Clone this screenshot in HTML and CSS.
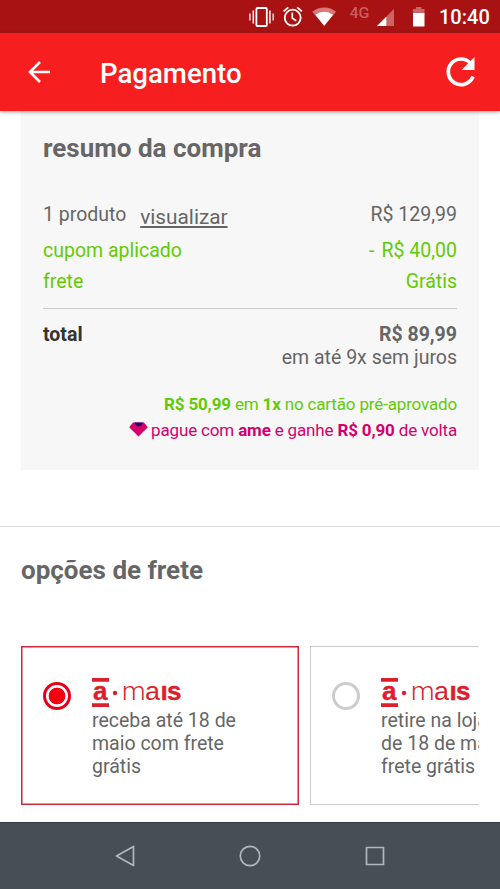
FILE: index.html
```html
<!DOCTYPE html>
<html lang="pt-BR">
<head>
<meta charset="utf-8">
<meta name="viewport" content="width=device-width">
<title>Pagamento</title>
<link rel="stylesheet" href="styles.css">
</head>
<body>
<div class="statusbar">
  <svg class="status-icons" width="190" height="33" viewBox="242 0 190 33">
    <g fill="none" stroke="#fff" stroke-width="1.8">
      <rect x="256.4" y="8" width="10.4" height="18" rx="1"/>
      <path d="M253.3 10.5v13M269.9 10.5v13" stroke-width="1.5"/>
      <path d="M249.9 13.5v7M273.2 13.5v7" stroke-width="1.3"/>
      <circle cx="292.7" cy="17.7" r="8"/>
      <path d="M292.3 12.5v5.8l4 2.5" stroke-width="1.6"/>
      <path d="M283.6 11.4l4.700-4M297.200 7.400l4.700 4"/>
    </g>
    <path d="M312.300 11.800C319 6 329.500 6 336 11.800L324.200 25.800Z" fill="#d97878"/>
    <path d="M315.300 14.800Q324.200 8.800 333.100 14.800L324.200 25.800Z" fill="#fff"/>
    <text class="network" x="349.500" y="17.800" textLength="20" lengthAdjust="spacingAndGlyphs">4G</text>
    <path d="M377 26L394 9V26Z" fill="#ca6565"/>
    <path d="M377 26L386.300 16.700V26Z" fill="#fff"/>
    <path d="M413 13V9h3V7h5.500v2h3v4z" fill="#ca6565"/>
    <path d="M413 13h11.500v13.500H413z" fill="#fff"/>
  </svg>
  <span class="clock">10:40</span>
</div>
<header class="appbar">
  <svg class="back" width="24" height="24" viewBox="0 0 24 24" fill="none" stroke="#fff" stroke-width="2.6"><path d="M24 12H4.500M14 2L4 12 14 22"/></svg>
  <h1>Pagamento</h1>
  <svg class="reload" width="32" height="32" viewBox="0 0 32 32"><path d="M25.600 7.200A12.800 12.800 0 1 0 28 20.500" fill="none" stroke="#fff" stroke-width="3.700"/><path d="M29.500 1V14H16.500Z" fill="#fff"/></svg>
</header>
<main>
  <section class="summary">
    <h2>resumo da compra</h2>
    <div class="row product"><span>1 produto <a class="view">visualizar</a></span><span>R$ 129,99</span></div>
    <div class="row discount"><span>cupom aplicado</span><span><span class="minus">-</span>R$ 40,00</span></div>
    <div class="row discount"><span>frete</span><span>Grátis</span></div>
    <div class="totals">
      <strong class="total-label">total</strong>
      <div class="amount"><strong>R$ 89,99</strong><br><span class="installments">em até 9x sem juros</span></div>
    </div>
    <div class="offers">
      <p class="card-offer"><b>R$ 50,99</b> em <b>1x</b> no cartão pré-aprovado</p>
      <p class="ame-offer"><svg class="gem" width="19" height="15" viewBox="0 0 19 15"><path d="M4 .5H15L18.800 5.300 9.500 14.500.2 5.300Z" fill="#d5006c"/><path d="M5.500.5H14L12.500 3.500 9.700 4.500 7 3.500Z" fill="#22066e"/></svg><span>pague com <b>ame</b> e ganhe <b>R$ 0,90</b> de volta</span></p>
    </div>
  </section>
  <section class="shipping">
    <h2>opções de frete</h2>
    <div class="options">
      <label class="option selected">
        <span class="radio"></span>
        <span class="detail">
          <svg class="logo" width="92" height="30" viewBox="0 0 92 30"><path d="M0 0h17v3.700H0zM0 25.200h17v3.700H0z"/><text class="heavy" x="1" y="22" textLength="14.500" lengthAdjust="spacingAndGlyphs">a</text><circle cx="23" cy="15" r="2.200"/><text class="thin" x="30" y="22" textLength="23.500" lengthAdjust="spacingAndGlyphs">m</text><text class="regular" x="53" y="22" textLength="15" lengthAdjust="spacingAndGlyphs">a</text><text class="heavy" x="68.500" y="22">ı</text><text class="heavy" x="75" y="22" textLength="14.500" lengthAdjust="spacingAndGlyphs">s</text></svg>
          <span>receba até 18 de<br>maio com frete<br>grátis</span>
        </span>
      </label>
      <label class="option">
        <span class="radio"></span>
        <span class="detail">
          <svg class="logo" width="92" height="30" viewBox="0 0 92 30"><path d="M0 0h17v3.700H0zM0 25.200h17v3.700H0z"/><text class="heavy" x="1" y="22" textLength="14.500" lengthAdjust="spacingAndGlyphs">a</text><circle cx="23" cy="15" r="2.200"/><text class="thin" x="30" y="22" textLength="23.500" lengthAdjust="spacingAndGlyphs">m</text><text class="regular" x="53" y="22" textLength="15" lengthAdjust="spacingAndGlyphs">a</text><text class="heavy" x="68.500" y="22">ı</text><text class="heavy" x="75" y="22" textLength="14.500" lengthAdjust="spacingAndGlyphs">s</text></svg>
          <span>retire na loja<br>de 18 de maio<br>frete grátis</span>
        </span>
      </label>
    </div>
  </section>
</main>
<nav class="navbar">
  <svg width="24" height="24" viewBox="0 0 24 24"><path d="M20.500 2.500V21.500L3.500 12Z"/></svg>
  <svg width="24" height="24" viewBox="0 0 24 24"><circle cx="12" cy="12" r="9.700"/></svg>
  <svg width="24" height="24" viewBox="0 0 24 24"><rect x="3.500" y="3.500" width="17" height="17"/></svg>
</nav>
</body>
</html>
```
FILE: styles.css
```css
* { box-sizing: border-box; }
body {
  margin: 0;
  width: 500px;
  height: 889px;
  display: flex;
  flex-direction: column;
  overflow: hidden;
  background: #fff;
  color: #666;
  font: 19.5px/30px Roboto, sans-serif;
}
h1, h2, p { margin: 0; }
svg { display: block; flex: none; overflow: visible; }
.statusbar {
  height: 33px;
  flex: none;
  display: flex;
  justify-content: flex-end;
  background: #a91212;
}
.network { font: 500 15.5px Roboto, sans-serif; fill: #ca5c5c; }
.clock {
  width: 68px;
  padding: 2px 0 0 7px;
  color: #fff;
  font-size: 20px;
  font-weight: 500;
  line-height: 30px;
}
.appbar {
  height: 78px;
  flex: none;
  z-index: 1;
  display: flex;
  align-items: center;
  padding: 0 23px 0 26px;
  background: #f71e1f;
  box-shadow: 0 1px 4px rgba(0, 0, 0, .4);
  color: #fff;
}
h1 { margin: 3px 0 0 50px; font-size: 27.6px; font-weight: 500; line-height: 36px; }
.reload { margin-left: auto; }
main { flex: 1; min-height: 0; }
h2 { font-size: 26px; font-weight: 700; line-height: 30px; }
.summary {
  height: 359px;
  margin: 0 21px;
  padding: 22px 22px 0;
  background: #f7f7f7;
}
.row { display: flex; justify-content: space-between; line-height: 30.5px; }
.product { margin: 37px 0 5.5px; }
.view { display: inline-block; margin-left: 9px; line-height: 24px; transform: translateY(3px); text-decoration: underline; text-underline-offset: 2px; font-size: 20.8px; }
.discount { color: #62cb05; }
.minus { margin-right: 7px; }
.totals {
  display: flex;
  justify-content: space-between;
  margin-top: 10.5px;
  padding-top: 14px;
  border-top: 1px solid #ccc;
  line-height: 23px;
}
.total-label { color: #333; }
.amount { text-align: right; }
.offers { margin-top: 22px; font-size: 17px; line-height: 26.5px; text-align: right; }
.offers p { letter-spacing: -.16px; }
.card-offer { color: #62cb05; }
.ame-offer { display: flex; justify-content: flex-end; align-items: center; gap: 3px; color: #d5006c; }
.gem { margin-top: -1px; }
.shipping { margin-top: 56px; padding: 28px 21px 0; border-top: 1px solid #ddd; }
.options { display: flex; gap: 11px; margin-top: 61px; overflow: hidden; }
.option {
  flex: 0 0 278px;
  height: 159px;
  display: flex;
  padding: 31px 0 0 21px;
  border: 1px solid #ccc;
  line-height: 22.800px;
}
.selected { border-color: #d2263b; box-shadow: inset 0 0 0 .5px #d2263b; }
.radio {
  flex: none;
  width: 28px;
  height: 28px;
  margin: 4px 21px 0 0;
  border: 3px solid #ccc;
  border-radius: 50%;
}
.selected .radio { border-color: #e6001b; background: radial-gradient(circle, #f5000e 8px, #fff 8.700px); }
.detail { white-space: nowrap; }
.logo { margin-bottom: 2px; fill: #dc1e2d; font: 26px "Liberation Sans", sans-serif; }
.heavy { font-weight: 700; stroke: #dc1e2d; stroke-width: .4px; }
.thin { font-family: Roboto, sans-serif; font-weight: 300; }
.navbar {
  height: 67px;
  flex: none;
  display: flex;
  justify-content: center;
  align-items: center;
  gap: 101px;
  border-top: 1px solid #343c41;
  background: #464f55;
}
.navbar svg { fill: none; stroke: #b1b7bf; stroke-width: 1.700; stroke-linejoin: round; }
```
